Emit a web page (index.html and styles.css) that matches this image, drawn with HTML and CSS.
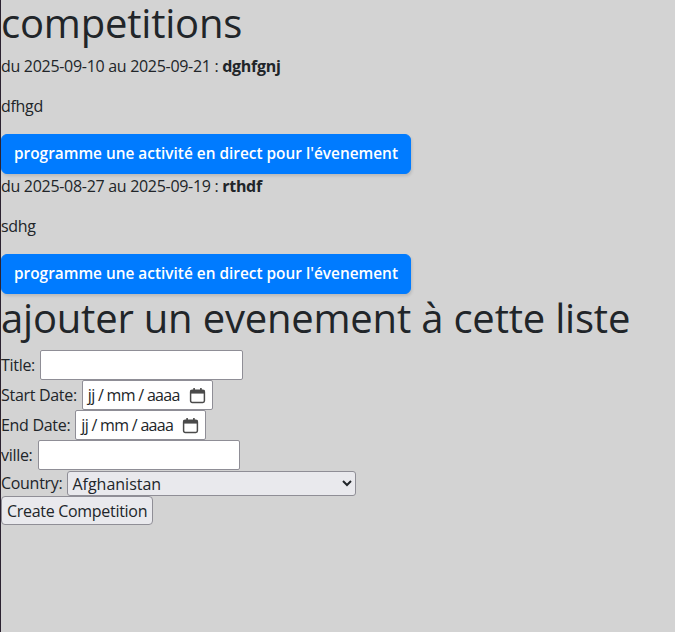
FILE: index.html
```html
<!DOCTYPE html>
<html lang="fr">
<head>
<meta charset="utf-8">
<title>competitions</title>
<link rel="stylesheet" href="styles.css">
</head>
<body>
<h1 class="title">competitions</h1>

<p class="dates">du 2025-09-10 au 2025-09-21 : <strong>dghfgnj</strong></p>
<p class="desc">dfhgd</p>
<button class="btn-primary" type="button">programme une activité en direct pour l'évenement</button>

<p class="dates">du 2025-08-27 au 2025-09-19 : <strong>rthdf</strong></p>
<p class="desc">sdhg</p>
<button class="btn-primary" type="button">programme une activité en direct pour l'évenement</button>

<h2 class="title">ajouter un evenement à cette liste</h2>

<form class="form">
  <div class="row"><label>Title:</label> <input class="text text-title" type="text"></div>
  <div class="row"><label>Start Date:</label> <span class="date"><span class="date-text">jj / mm / aaaa</span><svg class="cal" viewBox="0 0 16 16" width="17" height="17"><rect x="1.5" y="3" width="13" height="11.5" rx="1.5" fill="none" stroke="#4a4a4a" stroke-width="1.4"/><rect x="1.5" y="3" width="13" height="3.2" fill="#4a4a4a"/><rect x="4" y="1" width="1.6" height="3" fill="#4a4a4a"/><rect x="10.4" y="1" width="1.6" height="3" fill="#4a4a4a"/></svg></span></div>
  <div class="row"><label>End Date:</label> <span class="date"><span class="date-text">jj / mm / aaaa</span><svg class="cal" viewBox="0 0 16 16" width="17" height="17"><rect x="1.5" y="3" width="13" height="11.5" rx="1.5" fill="none" stroke="#4a4a4a" stroke-width="1.4"/><rect x="1.5" y="3" width="13" height="3.2" fill="#4a4a4a"/><rect x="4" y="1" width="1.6" height="3" fill="#4a4a4a"/><rect x="10.4" y="1" width="1.6" height="3" fill="#4a4a4a"/></svg></span></div>
  <div class="row"><label>ville:</label> <input class="text text-ville" type="text"></div>
  <div class="row row-select"><label>Country:</label> <select class="country"><option>Afghanistan</option><option>Albania</option><option>Algeria</option></select></div>
  <div class="row"><button class="btn-default" type="submit">Create Competition</button></div>
</form>
</body>
</html>
```

FILE: styles.css
```css
html {
  background: #d3d3d3;
}
body {
  margin: 0;
  min-height: 632px;
  border-left: 1px solid #2b2230;
  font-family: "Open Sans", "Noto Sans", sans-serif;
  font-size: 16px;
  line-height: 1.5;
  letter-spacing: -0.3px;
  color: #212529;
  background: #d3d3d3;
}
.title {
  margin: 0 0 8px;
  font-size: 40px;
  font-weight: 400;
  line-height: 46px;
  letter-spacing: -0.2px;
}
h2.title {
  line-height: 48px;
}
p {
  margin: 0 0 16px;
}
strong {
  font-weight: 700;
}
.btn-primary {
  display: block;
  box-sizing: border-box;
  height: 40px;
  margin: 0;
  padding: 0 12px;
  font-family: inherit;
  font-size: 15.4px;
  font-weight: 600;
  line-height: 24px;
  letter-spacing: 0;
  color: #fff;
  background: #007bff;
  border: 1px solid #007bff;
  border-radius: 6px;
  box-shadow: 1px 2px 3px rgba(0, 0, 0, 0.12);
  cursor: pointer;
}
.form {
  margin: 0;
}
.row {
  display: flex;
  align-items: center;
}
.row label {
  margin-right: 5px;
}
.row-select {
  height: 26px;
}
.text {
  box-sizing: border-box;
  height: 30px;
  padding: 1px 2px;
  font-family: inherit;
  font-size: 16px;
  background: #fff;
  border: 1px solid #8f8e96;
  border-radius: 2px;
}
.text-title { width: 203px; }
.text-ville { width: 202px; }
.date {
  box-sizing: border-box;
  display: inline-flex;
  align-items: center;
  width: 131px;
  height: 30px;
  padding: 0 6px 0 5px;
  background: #fff;
  border: 1px solid #8f8e96;
  border-radius: 2px;
  font-size: 16px;
}
.date-text {
  flex: 1;
  letter-spacing: -0.7px;
  white-space: nowrap;
}
.cal {
  flex: none;
}
.country {
  box-sizing: border-box;
  width: 289px;
  height: 25px;
  margin: 0;
  font-family: inherit;
  font-size: 16px;
  color: #212529;
  background: #e9e9ed;
  border: 1px solid #8f8e96;
  border-radius: 3px;
}
.btn-default {
  box-sizing: border-box;
  height: 29px;
  margin: 0;
  padding: 1px 5px;
  font-family: inherit;
  font-size: 16px;
  letter-spacing: -0.3px;
  color: #212529;
  background: #e9e9ed;
  border: 1px solid #8f8e96;
  border-radius: 4px;
}
```
